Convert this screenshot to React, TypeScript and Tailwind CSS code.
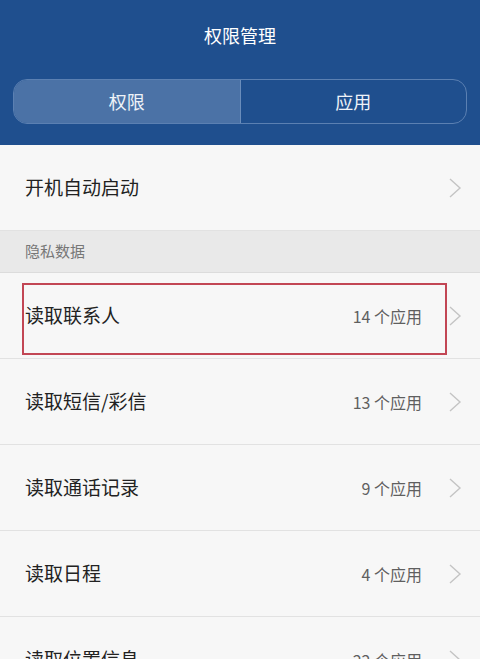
import React from "react";

const font = { fontFamily: '"Noto Sans CJK SC", "Noto Sans", sans-serif' };

function Chevron() {
  return (
    <svg width="14" height="22" viewBox="0 0 14 22" className="shrink-0">
      <polyline points="2,2 12,11 2,20" fill="none" stroke="#c4c4c4" strokeWidth="1.4" />
    </svg>
  );
}

function Row({ label, count, highlight }: { label: string; count?: string; highlight?: boolean }) {
  return (
    <div className="relative flex h-[86px] items-center border-b border-[#e2e2e2] bg-[#f7f7f7] pl-[25px] pr-[18px]">
      <span className="flex-1 text-[19px] text-[#222]">{label}</span>
      {count && <span className="mr-[26px] text-[16px] text-[#5f5f5f]">{count}</span>}
      <Chevron />
      {highlight && (
        <div className="pointer-events-none absolute left-[22px] top-[10px] h-[72px] w-[425px] border-2 border-[#c24654]" />
      )}
    </div>
  );
}

export default function App() {
  return (
    <div className="h-[659px] w-[480px] overflow-hidden bg-[#f7f7f7]" style={font}>
      <div className="flex h-[145px] flex-col bg-[#1f4f8e] px-[13px]">
        <div className="flex h-[70px] items-center justify-center pt-[1px] text-[18px] text-white">权限管理</div>
        <div className="mt-[9px] flex h-[45px] overflow-hidden rounded-[14px] border border-[#5b80b2]">
          <div className="flex flex-1 items-center justify-center border-r border-[#6a8dbb] bg-[#4b72a6] text-[18px] text-[#eef2f8]">
            权限
          </div>
          <div className="flex flex-1 items-center justify-center text-[18px] text-[#eef2f8]">应用</div>
        </div>
      </div>
      <Row label="开机自动启动" />
      <div className="flex h-[42px] items-center border-b border-[#dcdcdc] bg-[#e9e9e9] pl-[25px] text-[15px] text-[#777]">
        隐私数据
      </div>
      <Row label="读取联系人" count="14 个应用" highlight />
      <Row label="读取短信/彩信" count="13 个应用" />
      <Row label="读取通话记录" count="9 个应用" />
      <Row label="读取日程" count="4 个应用" />
      <Row label="读取位置信息" count="22 个应用" />
    </div>
  );
}
